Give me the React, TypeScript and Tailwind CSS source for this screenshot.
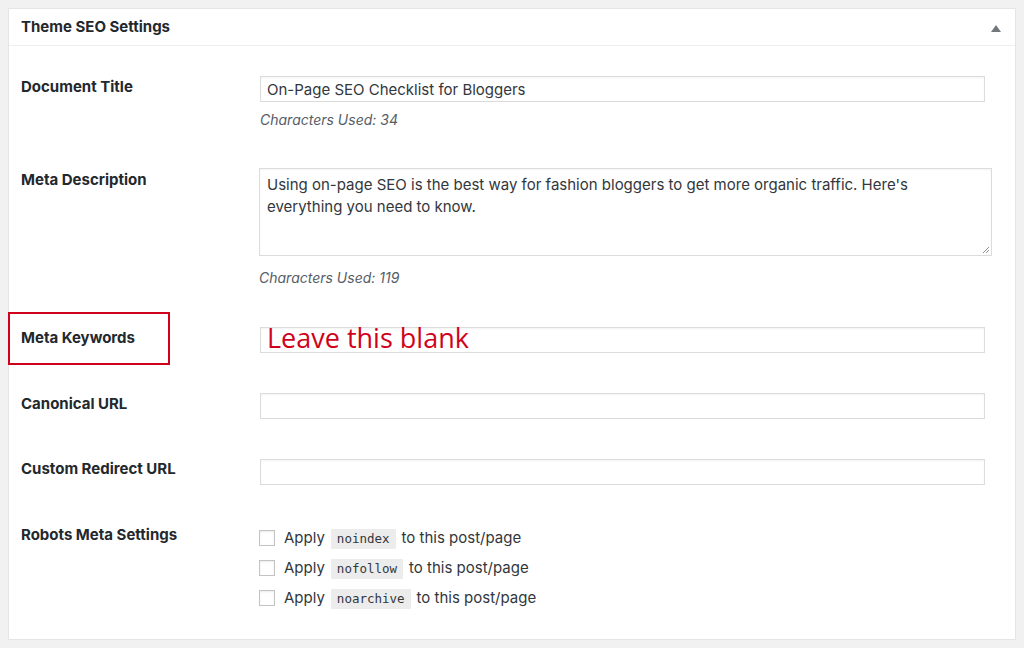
import * as React from "react";

const FONT = { fontFamily: "Inter, 'Noto Sans', Roboto, sans-serif" };
const MONO = { fontFamily: "'DejaVu Sans Mono', 'Liberation Mono', monospace" };

function TextField({ value }: { value?: string }) {
  return (
    <div className="h-[26px] w-[725px] border border-[#dcdcdc] bg-white px-[6px] text-[15px] leading-[25px] text-[#32373c] shadow-[inset_0_1px_2px_rgba(0,0,0,0.05)]">
      {value}
    </div>
  );
}

function Label({ children, mt }: { children: React.ReactNode; mt: string }) {
  return (
    <div className={`w-[238px] shrink-0 text-[15px] font-bold leading-[20px] text-[#23282d] ${mt}`}>
      {children}
    </div>
  );
}

function Counter({ n, mt }: { n: number; mt: string }) {
  return (
    <div className={`text-[14px] italic leading-[18px] text-[#555d66] ${mt}`}>
      Characters Used: {n}
    </div>
  );
}

function RobotCheck({ flag }: { flag: string }) {
  return (
    <label className="flex h-[30px] items-center text-[15px] text-[#32373c]">
      <span className="mr-[9px] h-[16px] w-[16px] border border-[#c3c3c3] bg-white shadow-[inset_0_1px_2px_rgba(0,0,0,0.08)]" />
      <span>Apply</span>
      <code
        className="mx-[6px] mt-[1px] rounded-[1px] bg-[#ececec] px-[6px] py-[1px] text-[12.5px] leading-[18px] text-[#32373c]"
        style={MONO}
      >
        {flag}
      </code>
      <span>to this post/page</span>
    </label>
  );
}

export default function App() {
  return (
    <div className="min-h-[648px] bg-[#f1f1f1] px-[8px] pt-[8px]" style={FONT}>
      <div className="w-[1008px] border border-[#e5e5e5] bg-white">
        {/* header */}
        <div className="flex h-[37px] items-center justify-between border-b border-[#eeeeee] pl-[12px] pr-[14px]">
          <h2 className="mt-[1px] text-[15px] font-bold text-[#23282d]">Theme SEO Settings</h2>
          <svg width="10" height="7" viewBox="0 0 10 7" className="mt-[2px]">
            <path d="M5 0 L10 7 L0 7 Z" fill="#72777c" />
          </svg>
        </div>

        <div className="flex flex-col pb-[26px] pl-[12px]">
          {/* document title */}
          <div className="mt-[30px] flex">
            <Label mt="mt-[1px]">Document Title</Label>
            <div className="flex flex-col pl-[1px]">
              <TextField value="On-Page SEO Checklist for Bloggers" />
              <Counter n={34} mt="mt-[9px]" />
            </div>
          </div>

          {/* meta description */}
          <div className="mt-[39px] flex">
            <Label mt="mt-[2px]">Meta Description</Label>
            <div className="flex flex-col">
              <div className="relative h-[88px] w-[733px] border border-[#dcdcdc] bg-white px-[7px] py-[5px] text-[15px] leading-[22px] text-[#32373c] shadow-[inset_0_1px_2px_rgba(0,0,0,0.05)]">
                Using on-page SEO is the best way for fashion bloggers to get more organic traffic. Here's
                everything you need to know.
                <svg width="8" height="8" viewBox="0 0 8 8" className="absolute bottom-[1px] right-[1px]">
                  <path d="M7 1 L1 7 M7 4 L4 7" stroke="#8c8f94" strokeWidth="1" />
                </svg>
              </div>
              <Counter n={119} mt="mt-[13px]" />
            </div>
          </div>

          {/* meta keywords */}
          <div className="relative mt-[40px] flex">
            <div className="absolute left-[-13px] top-[-15px] h-[53px] w-[162px] border-2 border-[#d0021b]" />
            <Label mt="mt-[1px]">Meta Keywords</Label>
            <div className="pl-[1px]">
              <div className="flex h-[26px] w-[725px] items-center border border-[#dcdcdc] bg-white pl-[6px] shadow-[inset_0_1px_2px_rgba(0,0,0,0.05)]">
                <span
                  className="-mt-[5px] text-[27px] leading-none text-[#d0021b]"
                  style={{ fontFamily: "'Open Sans', sans-serif" }}
                >
                  Leave this blank
                </span>
              </div>
            </div>
          </div>

          {/* canonical */}
          <div className="mt-[40px] flex">
            <Label mt="mt-[1px]">Canonical URL</Label>
            <div className="pl-[1px]">
              <TextField />
            </div>
          </div>

          {/* redirect */}
          <div className="mt-[40px] flex">
            <Label mt="mt-0">Custom Redirect URL</Label>
            <div className="pl-[1px]">
              <TextField />
            </div>
          </div>

          {/* robots */}
          <div className="mt-[38px] flex">
            <Label mt="mt-[2px]">Robots Meta Settings</Label>
            <div className="flex flex-col">
              <RobotCheck flag="noindex" />
              <RobotCheck flag="nofollow" />
              <RobotCheck flag="noarchive" />
            </div>
          </div>
        </div>
      </div>
    </div>
  );
}
